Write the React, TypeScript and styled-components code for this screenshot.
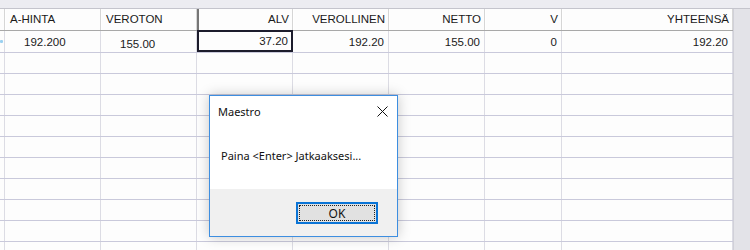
import { FC } from "react";
import styled, { createGlobalStyle } from "styled-components";

const GlobalStyle = createGlobalStyle`
  html, body {
    margin: 0;
    padding: 0;
    background: #fdfdfd;
  }
  body {
    font-family: "Liberation Sans", Arial, sans-serif;
  }
`;

const Screen = styled.div`
  position: relative;
  width: 750px;
  height: 250px;
  overflow: hidden;
  background: #fdfdfd;
`;

const TopBand = styled.div`
  height: 8px;
  background: #ececf1;
  border-bottom: 1px solid #c4c4cc;
`;

const GridArea = styled.div`
  display: flex;
  height: 241px;
  overflow: hidden;
`;

const Grid = styled.div`
  display: flex;
  flex-direction: column;
  width: 733px;
  flex-shrink: 0;
`;

const Filler = styled.div`
  flex: 1;
  background: #e3e3e8;
  border-left: 1px solid #d0d0d8;
`;

const HeaderRow = styled.div`
  display: flex;
  height: 22px;
  flex-shrink: 0;
  box-sizing: border-box;
  border-bottom: 1px solid #a8a8a8;
  background: #fdfdfd;
`;

const Row = styled.div<{ $h?: number }>`
  display: flex;
  height: ${(p) => p.$h ?? 21}px;
  box-sizing: border-box;
  border-bottom: 1px solid #c9c9db;
  flex-shrink: 0;
`;

const HeadCell = styled.div<{ $w: number; $right?: boolean; $selected?: boolean }>`
  width: ${(p) => p.$w}px;
  flex-shrink: 0;
  overflow: hidden;
  white-space: nowrap;
  box-sizing: border-box;
  display: flex;
  align-items: center;
  justify-content: ${(p) => (p.$right ? "flex-end" : "flex-start")};
  padding: ${(p) => (p.$w < 10 ? "0" : "0 3px 1px 4px")};
  font-size: 11.5px;
  color: #1a1a1a;
  border-right: 1px solid #d6d6d6;
  border-left: ${(p) =>
    p.$selected ? "2px solid #767676" : p.$w < 10 ? "none" : "1px solid #ffffff"};
`;

const Cell = styled.div<{ $w: number; $right?: boolean; $pad?: number; $drop?: number; $focus?: boolean }>`
  width: ${(p) => p.$w}px;
  flex-shrink: 0;
  overflow: hidden;
  white-space: nowrap;
  box-sizing: border-box;
  display: flex;
  align-items: center;
  justify-content: ${(p) => (p.$right ? "flex-end" : "flex-start")};
  padding: ${(p) => (p.$w < 10 ? "0" : `${p.$drop ?? 0}px 4px 0 ${p.$pad ?? 4}px`)};
  font-size: 11.5px;
  color: #1a1a1a;
  border-right: 1px solid #dcdce4;
  ${(p) =>
    p.$focus &&
    `
    border: 2px solid #1c1c2c;
    margin-top: -1px;
    height: 22px;
    padding-right: 3px;
  `}
`;

const Marker = styled.span`
  width: 3px;
  height: 3px;
  background: #9ad0f0;
  border-radius: 1px;
`;

const Dialog = styled.div`
  position: absolute;
  left: 209px;
  top: 95px;
  width: 189px;
  height: 142px;
  box-sizing: border-box;
  border: 1px solid #3d8ee0;
  background: #ffffff;
  box-shadow: 0 0 12px rgba(0, 0, 0, 0.22);
  display: flex;
  flex-direction: column;
  font-family: "Noto Sans", "Open Sans", sans-serif;
  font-size: 11px;
  color: #111;
`;

const TitleBar = styled.div`
  height: 29px;
  display: flex;
  align-items: center;
  justify-content: space-between;
  padding: 2px 9px 0 8px;
  box-sizing: border-box;
`;

const Body = styled.div`
  flex: 1;
  display: flex;
  align-items: center;
  padding: 0 0 3px 11px;
`;

const Footer = styled.div`
  height: 47px;
  background: #f0f0f0;
  display: flex;
  justify-content: flex-end;
  padding: 13px 19px 0 0;
  box-sizing: border-box;
`;

const OkButton = styled.button`
  width: 82px;
  height: 22px;
  box-sizing: border-box;
  border: 2px solid #0a74d6;
  background: #e1e1e1;
  padding: 1px;
  font: inherit;
  font-size: 12px;
  color: #111;
  cursor: pointer;
`;

const FocusRect = styled.span`
  display: flex;
  align-items: center;
  justify-content: center;
  height: 100%;
  border: 1px dotted #222;
  box-sizing: border-box;
`;

const cols = [
  { w: 5, label: "", right: false },
  { w: 96, label: "A-HINTA", right: false },
  { w: 96, label: "VEROTON", right: false },
  { w: 96, label: "ALV", right: true, selected: true },
  { w: 96, label: "VEROLLINEN", right: true },
  { w: 96, label: "NETTO", right: true },
  { w: 77, label: "V", right: true },
  { w: 171, label: "YHTEENSÄ", right: true },
];

const App: FC = () => {
  return (
    <Screen>
      <GlobalStyle />
      <TopBand />
      <GridArea>
        <Grid>
          <HeaderRow>
            {cols.map((c, i) => (
              <HeadCell key={i} $w={c.w} $right={c.right} $selected={c.selected}>
                {c.label}
              </HeadCell>
            ))}
          </HeaderRow>
          <Row $h={22}>
            <Cell $w={5}>
              <Marker />
            </Cell>
            <Cell $w={96} $pad={19} $drop={0}>
              192.200
            </Cell>
            <Cell $w={96} $pad={19} $drop={4}>
              155.00
            </Cell>
            <Cell $w={96} $right $focus>
              37.20
            </Cell>
            <Cell $w={96} $right>
              192.20
            </Cell>
            <Cell $w={96} $right>
              155.00
            </Cell>
            <Cell $w={77} $right>
              0
            </Cell>
            <Cell $w={171} $right>
              192.20
            </Cell>
          </Row>
          {Array.from({ length: 10 }).map((_, r) => (
            <Row key={r}>
              {cols.map((c, i) => (
                <Cell key={i} $w={c.w} />
              ))}
            </Row>
          ))}
        </Grid>
        <Filler />
      </GridArea>

      <Dialog>
        <TitleBar>
          <span>Maestro</span>
          <svg width="11" height="11" viewBox="0 0 11 11">
            <path d="M0.5 0.5 L10.5 10.5 M10.5 0.5 L0.5 10.5" stroke="#111" strokeWidth="1" />
          </svg>
        </TitleBar>
        <Body>Paina &lt;Enter&gt; Jatkaaksesi...</Body>
        <Footer>
          <OkButton>
            <FocusRect>OK</FocusRect>
          </OkButton>
        </Footer>
      </Dialog>
    </Screen>
  );
};

export default App;
